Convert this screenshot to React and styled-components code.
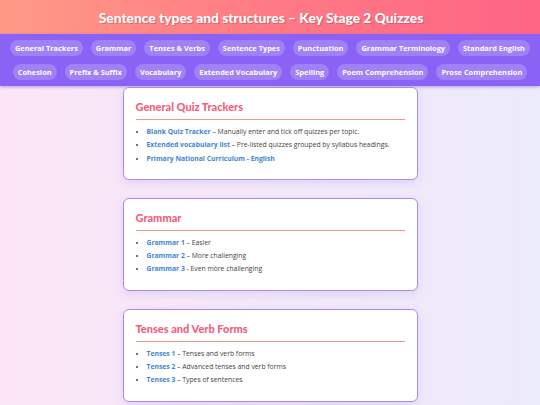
import React from 'react';
import styled, { createGlobalStyle } from 'styled-components';

const GlobalStyle = createGlobalStyle`
  html, body {
    margin: 0;
    padding: 0;
  }
  body {
    font-family: "Open Sans", "Noto Sans", sans-serif;
    background: linear-gradient(90deg, #fbe5f6 0%, #f3e8f9 50%, #ecebfb 100%);
    min-height: 405px;
    overflow: hidden;
  }
`;

const Header = styled.header`
  height: 34px;
  display: flex;
  align-items: center;
  justify-content: center;
  background: linear-gradient(90deg, #ff9a86 0%, #ff7a85 50%, #ff6585 100%);
`;

const Title = styled.h1`
  margin: 0 18px 0 0;
  font-family: Lato, "DejaVu Sans", sans-serif;
  font-weight: 900;
  font-size: 13.8px;
  color: #fff;
  text-shadow: 1px 1px 1px rgba(120, 40, 60, 0.35);
`;

const Nav = styled.nav`
  background: #8a62f6;
  padding: 6px 8px;
  display: flex;
  flex-direction: column;
  gap: 8px;
  box-shadow: 0 1px 3px rgba(90, 50, 200, 0.4);
`;

const NavRow = styled.div`
  display: flex;
  justify-content: center;
  gap: 8px;
`;

const Pill = styled.a`
  background: rgba(255, 255, 255, 0.2);
  color: #fff;
  font-size: 7.4px;
  font-weight: 700;
  height: 16px;
  padding: 0 5px;
  border-radius: 8px;
  display: flex;
  align-items: center;
  white-space: nowrap;
`;

const Main = styled.main`
  display: flex;
  flex-direction: column;
  align-items: center;
  gap: 18px;
  padding-top: 1px;
`;

const Card = styled.section`
  width: 295px;
  box-sizing: border-box;
  background: #fff;
  border: 1px solid #a98af0;
  border-radius: 6px;
  padding: 11px 12px 14px;
  box-shadow: 0 3px 8px rgba(140, 110, 220, 0.18);
`;

const CardTitle = styled.h2`
  margin: 0;
  font-family: Lato, "DejaVu Sans", sans-serif;
  font-weight: 900;
  font-size: 11px;
  line-height: 15px;
  color: #f2607e;
  padding-bottom: 5px;
  border-bottom: 1px solid #f29585;
`;

const List = styled.ul`
  margin: 5px 0 0;
  padding-left: 11px;
  font-size: 6.8px;
  color: #444;
  li {
    line-height: 13.3px;
  }
`;

const Link = styled.a`
  color: #3f86d0;
  font-weight: 700;
  text-decoration: none;
`;

const rows = [
  ['General Trackers', 'Grammar', 'Tenses & Verbs', 'Sentence Types', 'Punctuation', 'Grammar Terminology', 'Standard English'],
  ['Cohesion', 'Prefix & Suffix', 'Vocabulary', 'Extended Vocabulary', 'Spelling', 'Poem Comprehension', 'Prose Comprehension'],
];

const sections = [
  {
    title: 'General Quiz Trackers',
    items: [
      ['Blank Quiz Tracker', ' – Manually enter and tick off quizzes per topic.'],
      ['Extended vocabulary list', ' – Pre-listed quizzes grouped by syllabus headings.'],
      ['Primary National Curriculum - English', ''],
    ],
  },
  {
    title: 'Grammar',
    items: [
      ['Grammar 1', ' – Easier'],
      ['Grammar 2', ' – More challenging'],
      ['Grammar 3', ' - Even more challenging'],
    ],
  },
  {
    title: 'Tenses and Verb Forms',
    items: [
      ['Tenses 1', ' – Tenses and verb forms'],
      ['Tenses 2', ' – Advanced tenses and verb forms'],
      ['Tenses 3', ' – Types of sentences'],
    ],
  },
];

export default function App() {
  return (
    <>
      <GlobalStyle />
      <Header>
        <Title>Sentence types and structures – Key Stage 2 Quizzes</Title>
      </Header>
      <Nav>
        {rows.map((row, i) => (
          <NavRow key={i}>
            {row.map((label) => (
              <Pill key={label}>{label}</Pill>
            ))}
          </NavRow>
        ))}
      </Nav>
      <Main>
        {sections.map((s) => (
          <Card key={s.title}>
            <CardTitle>{s.title}</CardTitle>
            <List>
              {s.items.map(([link, rest]) => (
                <li key={link}>
                  <Link>{link}</Link>
                  {rest}
                </li>
              ))}
            </List>
          </Card>
        ))}
      </Main>
    </>
  );
}
